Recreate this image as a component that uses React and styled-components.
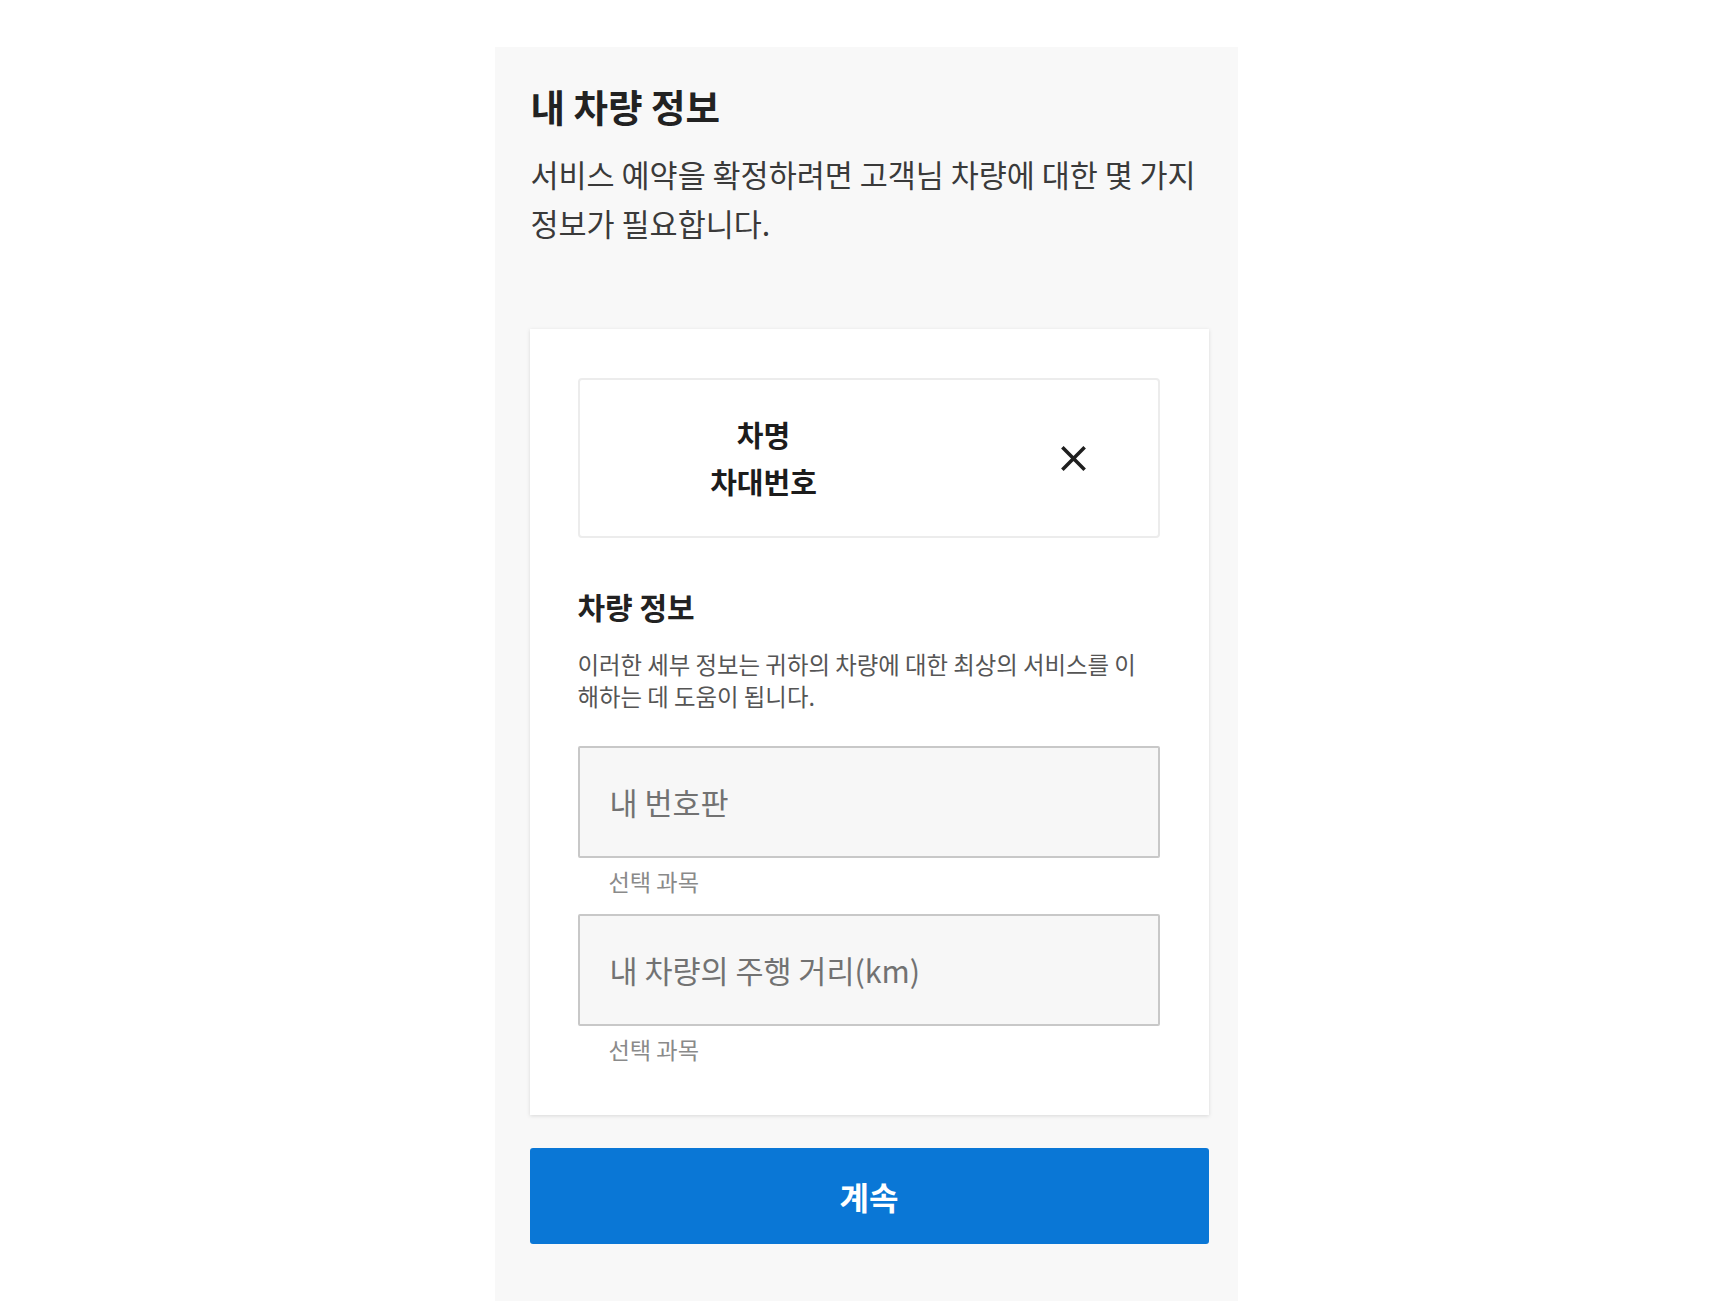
import React from 'react';
import styled, { createGlobalStyle } from 'styled-components';

/* ---------- GLOBAL ---------- */
const GlobalStyle = createGlobalStyle`
    html, body {
        margin: 0;
        padding: 0;
        background: #ffffff;
    }
    body {
        font-family: "Noto Sans CJK KR", "Noto Sans", sans-serif;
    }
    * {
        box-sizing: border-box;
    }
`

/* ---------- STYLES ---------- */
const Page = styled.div`
    display: flex;
    justify-content: center;
    min-height: 100vh;
    padding-top: 47px;
`
const Panel = styled.main`
    display: flex;
    flex-direction: column;

    width: 743px;
    margin-right: 3px;
    padding: 36px 29px 40px 35px;

    background: #f8f8f8;
`
const Title = styled.h1`
    margin: 0 0 0 1px;

    font-size: 37.5px;
    font-weight: 700;
    line-height: 46px;
    color: #222222;
`
const Intro = styled.p`
    margin: 21px 0 0 1px;

    font-size: 30.5px;
    font-weight: 400;
    line-height: 49px;
    color: #3a3a3a;
    white-space: nowrap;
`
const Card = styled.section`
    display: flex;
    flex-direction: column;

    margin-top: 81px;
    padding: 49px 49px 51px 48px;

    background: #ffffff;
    box-shadow: 0 1px 4px rgba(0, 0, 0, 0.13);
`
const VehicleBox = styled.div`
    display: grid;
    grid-template-columns: 368px 1fr;
    align-items: center;

    height: 160px;

    border: 2px solid #ececec;
    border-radius: 4px;
`
const VehicleText = styled.div`
    text-align: center;

    font-size: 29px;
    font-weight: 700;
    line-height: 47px;
    color: #1c1c1c;
`
const CloseButton = styled.button`
    justify-self: end;
    display: flex;
    align-items: center;
    justify-content: center;

    width: 40px;
    height: 40px;
    margin-right: 64px;
    padding: 0;

    background: none;
    border: none;
    cursor: pointer;
`
const SectionTitle = styled.h2`
    margin: 48px 0 0;

    font-size: 30px;
    font-weight: 700;
    line-height: 40px;
    color: #222222;
`
const SectionText = styled.p`
    margin: 22px 0 0;

    font-size: 23.4px;
    font-weight: 400;
    line-height: 32px;
    color: #555555;
    white-space: nowrap;
`
const Field = styled.div`
    display: flex;
    flex-direction: column;

    margin-top: ${props => props.$first ? '34px' : '18px'};
`
const Input = styled.input`
    width: 100%;
    height: 112px;
    padding: 0 30px;

    font-family: "Noto Sans CJK KR", "Noto Sans", sans-serif;
    font-size: 30.5px;
    color: #222222;

    background: #f7f7f7;
    border: 2px solid #c8c8c8;
    border-radius: 2px;
    outline: none;

    &::placeholder {
        color: #727272;
    }
`
const Helper = styled.span`
    margin: 8px 0 0 31px;

    font-size: 23.2px;
    line-height: 30px;
    color: #8a8a8a;
`
const ContinueButton = styled.button`
    height: 96px;
    margin-top: 33px;

    font-family: "Noto Sans CJK KR", "Noto Sans", sans-serif;
    font-size: 32px;
    font-weight: 700;
    color: #ffffff;

    background: #0a77d6;
    border: none;
    border-radius: 3px;
    cursor: pointer;
`

function CloseIcon() {
    return (
        <svg width="25" height="25" viewBox="0 0 24 24" fill="none">
            <path d="M2.5 2.5 L21.5 21.5 M21.5 2.5 L2.5 21.5" stroke="#1e1e1e" strokeWidth="3.4" strokeLinecap="square" />
        </svg>
    )
}

export default function App() {
    return (
        <>
            <GlobalStyle />
            <Page>
                <Panel>
                    <Title>내 차량 정보</Title>
                    <Intro>서비스 예약을 확정하려면 고객님 차량에 대한 몇 가지<br />정보가 필요합니다.</Intro>
                    <Card>
                        <VehicleBox>
                            <VehicleText>
                                <div>차명</div>
                                <div>차대번호</div>
                            </VehicleText>
                            <CloseButton aria-label="닫기">
                                <CloseIcon />
                            </CloseButton>
                        </VehicleBox>
                        <SectionTitle>차량 정보</SectionTitle>
                        <SectionText>이러한 세부 정보는 귀하의 차량에 대한 최상의 서비스를 이<br />해하는 데 도움이 됩니다.</SectionText>
                        <Field $first>
                            <Input placeholder="내 번호판" />
                            <Helper>선택 과목</Helper>
                        </Field>
                        <Field>
                            <Input placeholder="내 차량의 주행 거리(km)" />
                            <Helper>선택 과목</Helper>
                        </Field>
                    </Card>
                    <ContinueButton>계속</ContinueButton>
                </Panel>
            </Page>
        </>
    )
}
